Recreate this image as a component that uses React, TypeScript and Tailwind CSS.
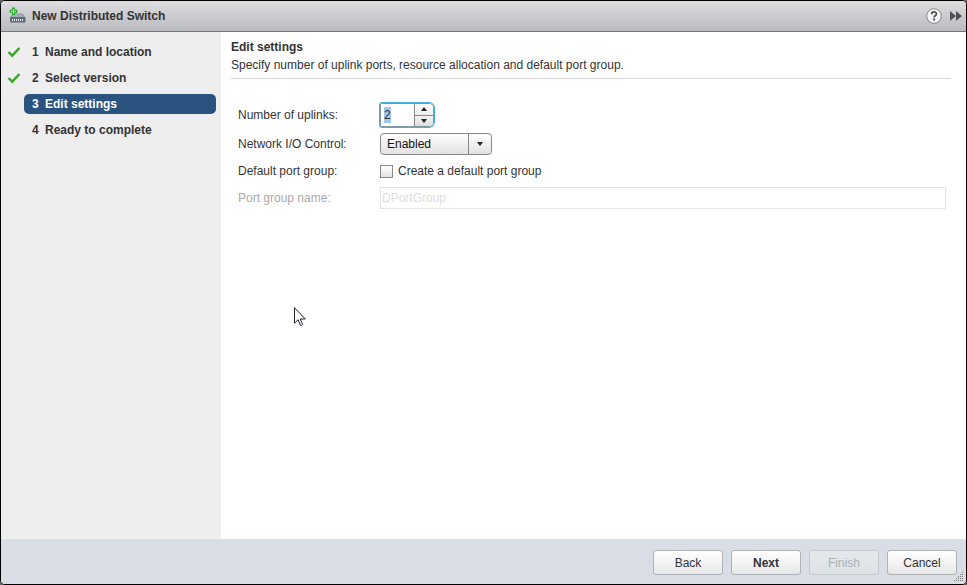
import { useEffect, useRef, useState } from "react";
import clsx from "clsx";

const steps = [
    { name: "Name and location", done: true },
    { name: "Select version", done: true },
    { name: "Edit settings", current: true },
    { name: "Ready to complete" },
]

const SwitchIcon = () => (
    <svg width="18" height="18" viewBox="0 0 18 18" aria-hidden="true">
        <path d="M4 7h9.500l2.500 4H1.500z" fill="#a3afb9" stroke="#7d8993" strokeWidth="0.8" />
        <rect x="1" y="10" width="15.500" height="5.500" rx="1" fill="#5c6c78" />
        <path d="M3 12h1v2H3zM5 12h1v2H5zM7 12h1v2H7zM9 12h1v2H9zM11 12h1v2h-1zM13 12h1v2h-1z" fill="#e9edf0" />
        <path d="M3 .5h3v2.300h2.300v3H6V8H3V5.800H.700v-3H3z" fill="#2aa52c" />
        <path d="M4.500 2v5M2 4.300h5" stroke="#b5f0a5" strokeWidth="1" />
    </svg>
)

const CheckIcon = () => (
    <svg width="14" height="12" viewBox="0 0 14 12" aria-hidden="true">
        <path d="M1.500 6l3.700 3.700L12.500 2" fill="none" stroke="#36a823" strokeWidth="2.400" />
    </svg>
)

const Arrow = ({ up = false }: { up?: boolean }) => (
    <svg width="6" height="4" viewBox="0 0 6 4" aria-hidden="true">
        <path d={up ? "M0 4L3 0l3 4z" : "M0 0h6L3 4z"} fill="#222" />
    </svg>
)

const TitleBar = () => (
    <header className="flex h-[31px] items-center border-b border-[#77777b] bg-linear-to-b from-[#dedee1] to-[#b9babf] pr-1 pl-2">
        <SwitchIcon />
        <h1 className="ml-[5px] flex-1 font-bold">New Distributed Switch</h1>
        <button type="button" aria-label="Help" className="mr-2">
            <svg width="16" height="16" viewBox="0 0 16 16" aria-hidden="true">
                <circle cx="8" cy="8" r="7.300" fill="#f5f5f6" stroke="#85868a" />
                <path d="M5.700 6.200c0-3 4.700-3 4.700-.3 0 1.700-2.300 1.600-2.300 3.600" fill="none" stroke="#505155" strokeWidth="1.800" />
                <path d="M7.100 10.600h2v1.800h-2z" fill="#505155" />
            </svg>
        </button>
        <button type="button" aria-label="Expand">
            <svg width="12" height="10" viewBox="0 0 12 10" aria-hidden="true">
                <path d="M0 0l6 5-6 5zM6 0l6 5-6 5z" fill="#505155" />
            </svg>
        </button>
    </header>
)

const StepList = () => (
    <nav aria-label="Steps" className="w-[220px] shrink-0 bg-[#eee] pt-[10px] pr-[5px] pl-[6px]">
        <ol className="flex flex-col gap-[6px]">
            {steps.map((step, i) => (
                <li key={step.name} className="flex h-5 items-center" aria-current={step.current ? "step" : undefined}>
                    <span className="w-[17px]">{step.done && <CheckIcon />}</span>
                    <a
                        href="#"
                        className={clsx(
                            "flex h-5 flex-1 items-center rounded-[5px] pl-2 font-bold",
                            step.current && "bg-[#2a547f] text-white"
                        )}
                    >
                        <span className="w-[13px]">{i + 1}</span>
                        {step.name}
                    </a>
                </li>
            ))}
        </ol>
    </nav>
)

const Spinner = () => {
    const [uplinks, setUplinks] = useState(2)
    const input = useRef<HTMLInputElement>(null)

    useEffect(() => {
        input.current?.focus()
        input.current?.select()
    }, [])

    return (
        <div className="flex h-6 w-[54px] rounded-r-[5px] rounded-l-[2px] border border-[#7d98a6] ring-1 ring-[#45b0e0]">
            <input
                id="uplinks"
                ref={input}
                value={uplinks}
                onChange={(e) => setUplinks(Number(e.target.value) || 0)}
                className="w-[33px] bg-white pl-[3px] outline-none selection:bg-[#a6c6f2] selection:text-[#333]"
            />
            <div className="flex flex-1 flex-col border-l border-[#888]">
                <button type="button" aria-label="More" onClick={() => setUplinks(uplinks + 1)} className="flex flex-1 items-center justify-center rounded-tr bg-linear-to-b from-white to-[#eee]">
                    <Arrow up />
                </button>
                <button type="button" aria-label="Fewer" onClick={() => setUplinks(uplinks - 1)} className="flex flex-1 items-center justify-center rounded-br border-t border-[#888] bg-linear-to-b from-[#f5f5f5] to-[#ddd]">
                    <Arrow />
                </button>
            </div>
        </div>
    )
}

const SettingsForm = () => (
    <div className="grid grid-cols-[142px_1fr] items-center gap-y-[6px] pr-[5px] pl-[7px]">
        <label htmlFor="uplinks">Number of uplinks:</label>
        <Spinner />

        <label htmlFor="nioc">Network I/O Control:</label>
        <div className="relative w-28">
            <select id="nioc" className="block h-[22px] w-full appearance-none rounded border border-[#888] bg-linear-to-b from-white to-[#e2e2e2] pl-[6px] text-[#111]">
                <option>Enabled</option>
                <option>Disabled</option>
            </select>
            <span className="pointer-events-none absolute inset-y-px right-px flex w-[23px] items-center justify-center border-l border-[#888]">
                <Arrow />
            </span>
        </div>

        <span>Default port group:</span>
        <label className="flex h-5 items-center gap-[5px]">
            <input type="checkbox" className="size-[13px] appearance-none border border-[#888] bg-linear-to-b from-white to-[#e4e4e4]" />
            Create a default port group
        </label>

        <label htmlFor="group-name" className="text-[#aaa]">Port group name:</label>
        <input id="group-name" disabled defaultValue="DPortGroup" className="h-[22px] w-full border border-[#e4e4e4] bg-white pl-px text-[#ddd]" />
    </div>
)

const FooterButton = ({ label, bold, disabled }: { label: string; bold?: boolean; disabled?: boolean }) => (
    <button
        type="button"
        disabled={disabled}
        className={clsx(
            "h-[25px] w-[70px] rounded-[3px] border",
            bold && "font-bold",
            disabled
                ? "border-[#c5cacf] bg-linear-to-b from-[#e6e9ec] to-[#dde1e4] text-[#aab1b5]"
                : "border-[#adb3b6] bg-linear-to-b from-white to-[#e7e7e7]"
        )}
    >
        {label}
    </button>
)

const ResizeGrip = () => (
    <svg className="absolute right-[2px] bottom-[2px]" width="10" height="10" viewBox="0 0 10 10" aria-hidden="true">
        <path d="M8 0h1M6 2h1M8 2h1M4 4h1M6 4h1M8 4h1M2 6h1M4 6h1M6 6h1M8 6h1M0 8h1M2 8h1M4 8h1M6 8h1M8 8h1" transform="translate(0 .5)" stroke="#777" />
    </svg>
)

const Cursor = () => (
    <svg className="pointer-events-none absolute top-[306px] left-[293px]" width="12" height="20" viewBox="0 0 12 20" aria-hidden="true">
        <path d="M.5.700v15.500l3.600-3.500 2.300 5.600c.8.600 2 .1 2.200-.8L6.300 12h5z" fill="#fff" stroke="#221c2c" />
    </svg>
)

export default function App() {
    return (
        <div className="min-h-screen bg-[#666] font-['Liberation_Sans',Arial,sans-serif] text-xs text-[#333]">
            <div className="relative flex min-h-screen flex-col overflow-hidden rounded-[5px] border border-black bg-white">
                <TitleBar />
                <div className="flex flex-1">
                    <StepList />
                    <main className="min-w-0 flex-1 pt-[6px] pr-[15px] pl-[10px]">
                        <div className="mb-6 border-b border-[#d5d5d5] pb-[4px] leading-[18px]">
                            <h2 className="font-bold">Edit settings</h2>
                            <p>Specify number of uplink ports, resource allocation and default port group.</p>
                        </div>
                        <SettingsForm />
                    </main>
                </div>
                <footer className="flex justify-end gap-2 bg-[#d9dde5] pt-[11px] pr-[9px] pb-[9px]">
                    <FooterButton label="Back" />
                    <FooterButton label="Next" bold />
                    <FooterButton label="Finish" disabled />
                    <FooterButton label="Cancel" />
                </footer>
                <ResizeGrip />
                <Cursor />
            </div>
        </div>
    )
}
